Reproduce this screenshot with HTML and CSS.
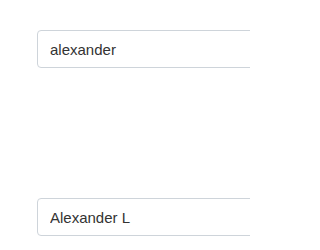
FILE: index.html
```html
<!DOCTYPE html>
<html>
<head>
<meta charset="utf-8">
<link rel="stylesheet" href="styles.css">
</head>
<body>
<div class="form">
  <input class="field" type="text" value="alexander">
  <input class="field" type="text" value="Alexander L">
</div>
</body>
</html>
```
FILE: styles.css
```css
html, body {
  margin: 0;
  padding: 0;
  background: #fff;
}
.form {
  box-sizing: border-box;
  width: 250px;
  height: 250px;
  overflow: hidden;
  display: flex;
  flex-direction: column;
  align-items: flex-start;
  gap: 130px;
  padding: 30px 0 0 37px;
}
.field {
  box-sizing: border-box;
  flex: none;
  width: 240px;
  height: 38px;
  padding: 0 12px;
  border: 1px solid #ced4da;
  border-radius: 4px;
  font-family: "Liberation Sans", Arial, sans-serif;
  font-size: 15px;
  color: #333;
  background: #fff;
  outline: none;
}
```
